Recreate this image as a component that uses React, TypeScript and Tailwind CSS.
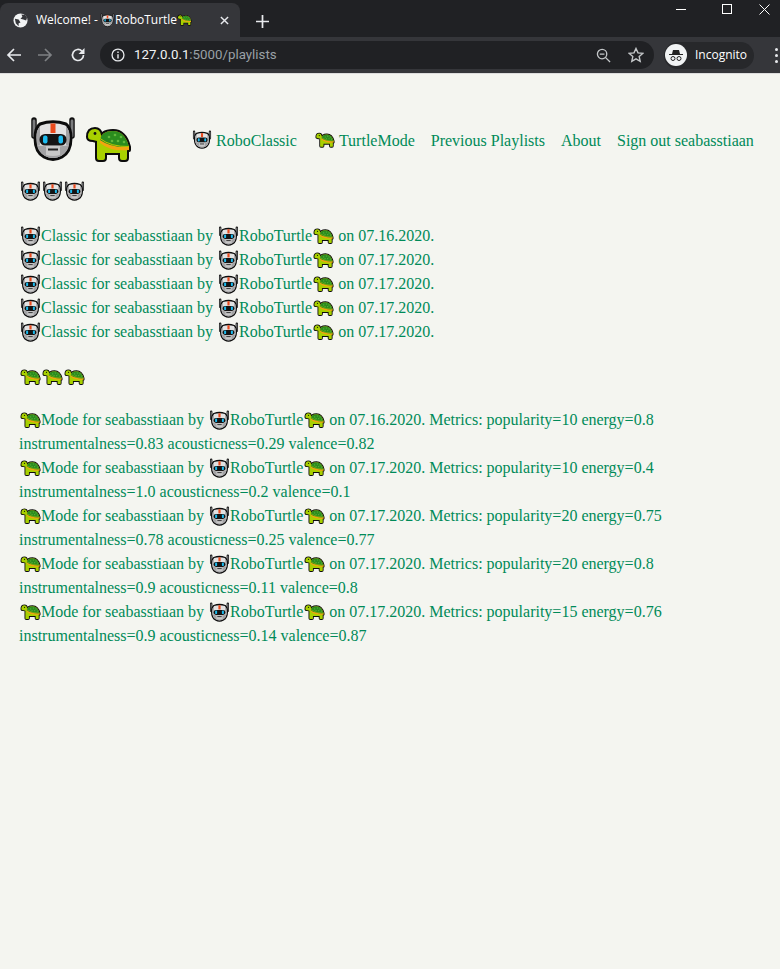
import React from "react";

const classicRows = ["07.16.2020", "07.17.2020", "07.17.2020", "07.17.2020", "07.17.2020"];

const modeRows = [
  { date: "07.16.2020", pop: 10, energy: 0.8, inst: "0.83", acoustic: "0.29", valence: "0.82" },
  { date: "07.17.2020", pop: 10, energy: 0.4, inst: "1.0", acoustic: "0.2", valence: "0.1" },
  { date: "07.17.2020", pop: 20, energy: 0.75, inst: "0.78", acoustic: "0.25", valence: "0.77" },
  { date: "07.17.2020", pop: 20, energy: 0.8, inst: "0.9", acoustic: "0.11", valence: "0.8" },
  { date: "07.17.2020", pop: 15, energy: 0.76, inst: "0.9", acoustic: "0.14", valence: "0.87" },
];

const headPath = "M11 8Q24 3.500 37 8Q42 12 42 22Q42 36 33 41Q24 46 15 41Q6 36 6 22Q6 12 11 8z";
const bodyPath = "M3 11Q3 3 10 3Q15 3 16 9L18 17L42 23V32Q42 34 40 34H37Q35 34 35 32V27H20V32Q20 34 18 34H14Q12 34 12 32V15L8 14Q3 14 3 11z";
const shellPath = "M15 14Q16 5 28 5Q40 5 44 21L44 24Q26 26 15 17z";

function Robot({ className }: { className: string }) {
  return (
    <svg viewBox="0 0 48 48" className={className}>
      <path d="M5 4V20M43 4V20" stroke="#111" strokeWidth="5.500" strokeLinecap="round" fill="none" />
      <path d="M5 5V20M43 5V20" stroke="#7b7c7e" strokeWidth="2.800" strokeLinecap="round" fill="none" />
      <path d={headPath} fill="#e2e2e2" stroke="#0c0c0c" strokeWidth="3" />
      <path d="M8 29Q24 32 40 29Q39 36 32 40Q24 44 16 40Q9 36 8 29z" fill="#a2a2a4" />
      <path d="M17 30H31V39Q24 41 17 39z" fill="#c8c8c8" />
      <path d="M8 15Q7 20 8 29L11 29V10z M40 15Q41 20 40 29L37 29V10z" fill="#a2a2a4" />
      <rect x="21.500" y="7.500" width="5" height="9.500" fill="#ea4a1d" />
      <rect x="10.500" y="18" width="27" height="11.500" rx="5.500" fill="#141414" />
      <rect x="14" y="19.500" width="4.500" height="8" rx="2" fill="#1cbcf0" />
      <rect x="29.500" y="19.500" width="4.500" height="8" rx="2" fill="#1cbcf0" />
      <rect x="19" y="32.500" width="10" height="2" fill="#222" />
    </svg>
  );
}

function Turtle({ className }: { className: string }) {
  return (
    <svg viewBox="0 0 47 36" className={className}>
      <path d={bodyPath} fill="#0c0c0c" stroke="#0c0c0c" strokeWidth="4" strokeLinejoin="round" />
      <path d={shellPath} fill="#0c0c0c" stroke="#0c0c0c" strokeWidth="4" strokeLinejoin="round" />
      <path d={bodyPath} fill="#a8d000" />
      <path d={shellPath} fill="#f2a510" />
      <path d="M15 14Q16 5 28 5Q40 5 44 21Q26 22 15 14z" fill="#2b8c1e" />
      <path d="M15 12.500Q26 21 44 20.500" stroke="#b8c800" strokeWidth="1" fill="none" />
      <circle cx="24" cy="11" r="1.300" fill="#62b83c" />
      <circle cx="30" cy="9" r="1.300" fill="#62b83c" />
      <circle cx="36" cy="11" r="1.300" fill="#62b83c" />
      <circle cx="27" cy="15" r="1.300" fill="#62b83c" />
      <circle cx="33" cy="15" r="1.300" fill="#62b83c" />
      <circle cx="39" cy="16" r="1.300" fill="#62b83c" />
      <circle cx="10" cy="7.500" r="1.400" fill="#111" />
    </svg>
  );
}

const RobotEmoji = () => (
  <span className="inline-block w-[22px] h-[20px] align-[-5px]">
    <Robot className="w-[21px] h-[21px] ml-px" />
  </span>
);

const TurtleEmoji = () => (
  <span className="inline-block w-[22px] h-[20px] align-[-5px]">
    <Turtle className="w-[21px] h-[16px] mt-[2px] ml-px" />
  </span>
);

function Browser() {
  return (
    <div className="h-[74px] bg-[#202124] text-white font-['Open_Sans','Liberation_Sans',sans-serif] border-b border-[#dcdcdc]">
      <div className="h-[37px] flex items-end relative">
        <div className="h-[34px] w-[240px] bg-[#35363a] rounded-t-lg flex items-center pl-[13px] pr-[11px] text-[12px]">
          <svg viewBox="0 0 16 16" className="w-[15px] h-[15px] mr-2 shrink-0">
            <circle cx="8" cy="8" r="7.500" fill="#f1f3f4" />
            <path d="M2 6l4 1 2 3-2 1v3L3 11zM9 1.500l1 2.500-2 2 3 1 3 1 1-3-2-3z" fill="#35363a" />
          </svg>
          <span className="whitespace-nowrap w-[64px]">Welcome! -</span>
          <Robot className="w-[15px] h-[15px] shrink-0" />
          <span className="whitespace-nowrap">RoboTurtle</span>
          <Turtle className="w-[15px] h-[12px] shrink-0" />
          <svg viewBox="0 0 10 10" className="w-[9px] h-[9px] ml-auto">
            <path d="M1 1l8 8M9 1l-8 8" stroke="#e8eaed" strokeWidth="1.600" />
          </svg>
        </div>
        <svg viewBox="0 0 12 12" className="w-[13px] h-[13px] ml-4 mb-[9px]">
          <path d="M6 0v12M0 6h12" stroke="#e8eaed" strokeWidth="1.600" />
        </svg>
        <div className="absolute right-0 top-0 h-[18px] flex items-center">
          <div className="w-[46px] flex justify-center">
            <div className="w-[10px] h-px bg-white" />
          </div>
          <div className="w-[46px] flex justify-center">
            <div className="w-[10px] h-[10px] border border-white" />
          </div>
          <div className="w-[30px] flex justify-center pr-px">
            <svg viewBox="0 0 11 11" className="w-[11px] h-[11px]">
              <path d="M.5.5l10 10M10.500.5l-10 10" stroke="#fff" strokeWidth="1" />
            </svg>
          </div>
        </div>
      </div>
      <div className="h-[36px] bg-[#35363a] flex items-center">
        <svg viewBox="0 0 16 16" className="w-[16px] h-[16px] ml-[6px]">
          <path d="M15 8H2M8 2L2 8l6 6" stroke="#e8eaed" strokeWidth="1.700" fill="none" />
        </svg>
        <svg viewBox="0 0 16 16" className="w-[16px] h-[16px] ml-[15px]">
          <path d="M1 8h13M8 2l6 6-6 6" stroke="#7f8184" strokeWidth="1.700" fill="none" />
        </svg>
        <svg viewBox="0 0 16 16" className="w-[16px] h-[16px] ml-[17px]">
          <path d="M13.500 8a5.500 5.500 0 1 1-1.600-3.900" stroke="#e8eaed" strokeWidth="1.700" fill="none" />
          <path d="M14.500 1v6h-6z" fill="#e8eaed" />
        </svg>
        <div className="ml-[14px] w-[554px] h-[28px] rounded-full bg-[#202124] flex items-center pl-[11px] pr-[10px] text-[13.3px] font-['Roboto',sans-serif]">
          <svg viewBox="0 0 16 16" className="w-[14px] h-[14px] mr-[9px]">
            <circle cx="8" cy="8" r="6.800" stroke="#e8eaed" strokeWidth="1.500" fill="none" />
            <path d="M8 7v5M8 4v1.600" stroke="#e8eaed" strokeWidth="1.600" />
          </svg>
          <span className="text-[#f1f3f4] whitespace-nowrap">127.0.0.1</span>
          <span className="text-[#9aa0a6] whitespace-nowrap">:5000/playlists</span>
          <svg viewBox="0 0 16 16" className="w-[15px] h-[15px] ml-auto">
            <circle cx="6.500" cy="6.500" r="5" stroke="#c4c7c9" strokeWidth="1.400" fill="none" />
            <path d="M4 6.500h5M10 10l5 5" stroke="#c4c7c9" strokeWidth="1.400" />
          </svg>
          <svg viewBox="0 0 16 16" className="w-[16px] h-[16px] ml-[17px]">
            <path d="M8 1.500l2 4.400 4.800.5-3.600 3.200 1 4.700L8 11.900l-4.200 2.400 1-4.700L1.200 6.400l4.800-.5z" stroke="#c4c7c9" strokeWidth="1.400" fill="none" />
          </svg>
        </div>
        <div className="ml-[10px] h-[27px] w-[90px] rounded-full bg-[#27282b] flex items-center text-[12px] shrink-0">
          <div className="w-[22px] h-[22px] ml-px rounded-full bg-[#f1f3f4] flex items-center justify-center">
            <svg viewBox="0 0 16 16" className="w-[16px] h-[16px]">
              <path d="M1 7h14v1H1zM4 7l1-4h6l1 4z" fill="#222" />
              <circle cx="5" cy="11.500" r="2" stroke="#222" strokeWidth="1" fill="none" />
              <circle cx="11" cy="11.500" r="2" stroke="#222" strokeWidth="1" fill="none" />
            </svg>
          </div>
          <span className="ml-2 whitespace-nowrap">Incognito</span>
        </div>
        <div className="ml-auto mr-[2px] flex flex-col gap-[3px]">
          <div className="w-[3px] h-[3px] rounded-full bg-[#e8eaed]" />
          <div className="w-[3px] h-[3px] rounded-full bg-[#e8eaed]" />
          <div className="w-[3px] h-[3px] rounded-full bg-[#e8eaed]" />
        </div>
      </div>
    </div>
  );
}

export default function App() {
  return (
    <div className="min-h-[969px] bg-[#f4f5f0] font-['Liberation_Serif',serif] text-[16px] leading-[24px] text-[#008a58]">
      <Browser />
      <div className="pl-[19px] pt-[42px]">
        <div className="flex items-end h-[48px]">
          <Robot className="w-[48px] h-[48px] ml-[10px] shrink-0" />
          <Turtle className="w-[47px] h-[36px] ml-[8px] mb-[2px] shrink-0" />
          <nav className="flex ml-[60px] h-[24px] -translate-y-[11px] whitespace-nowrap">
            <a className="mr-[18px]"><span className="inline-block w-[24px] h-[20px] align-[-4px]"><Robot className="w-[20px] h-[20px]" /></span>RoboClassic</a>
            <a className="mr-4"><span className="inline-block w-[24px] h-[20px] align-[-4px]"><Turtle className="w-[20px] h-[16px] mt-[2px]" /></span>TurtleMode</a>
            <a className="mr-4">Previous Playlists</a>
            <a className="mr-4">About</a>
            <a>Sign out seabasstiaan</a>
          </nav>
        </div>
        <div className="mt-[15px] h-[24px]">
          <RobotEmoji /><RobotEmoji /><RobotEmoji />
        </div>
        <div className="mt-[21px]">
          {classicRows.map((date, i) => (
            <div key={i}>
              <RobotEmoji />Classic for seabasstiaan by <RobotEmoji />RoboTurtle<TurtleEmoji /> on {date}.
            </div>
          ))}
        </div>
        <div className="mt-[21px] h-[24px]">
          <TurtleEmoji /><TurtleEmoji /><TurtleEmoji />
        </div>
        <div className="mt-[19px] w-[700px]">
          {modeRows.map((r, i) => (
            <div key={i}>
              <TurtleEmoji />Mode for seabasstiaan by <RobotEmoji />RoboTurtle<TurtleEmoji /> on {r.date}. Metrics: popularity={r.pop} energy={r.energy} instrumentalness={r.inst} acousticness={r.acoustic} valence={r.valence}
            </div>
          ))}
        </div>
      </div>
    </div>
  );
}
